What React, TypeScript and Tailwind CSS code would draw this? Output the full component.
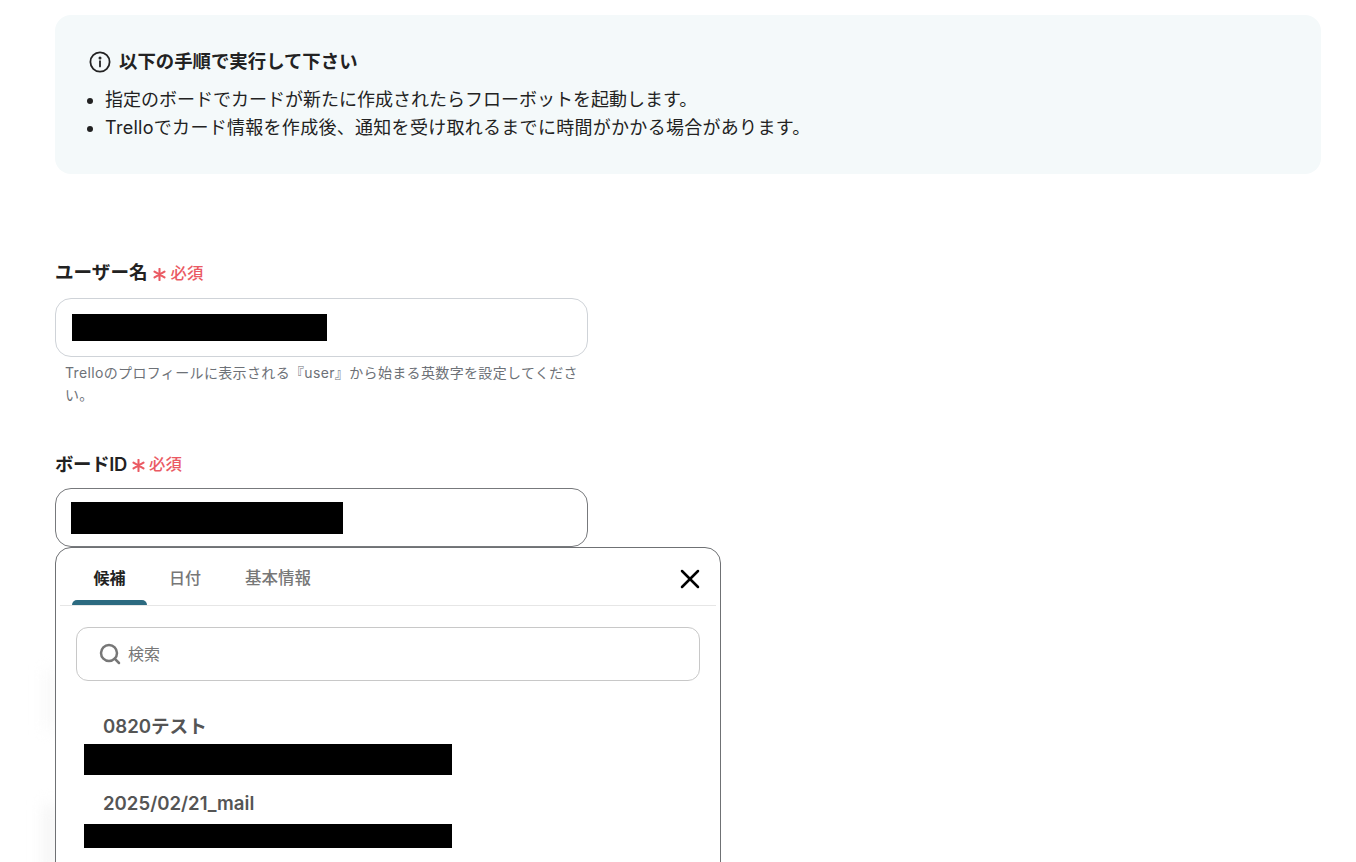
import React from "react";
import { X, Search } from "lucide-react";

function Required({ className }: { className: string }) {
  return (
    <span className="flex items-center text-[#ea5a63]">
      <span className={className + " w-[14px] flex justify-center"}>
        <svg width="13" height="13" viewBox="0 0 12 12" className="mt-[3px]" fill="none" stroke="currentColor" strokeWidth="1.9" strokeLinecap="round">
          <path d="M6 0.8V11.2M1.4 3.3L10.6 8.7M10.6 3.3L1.4 8.7" />
        </svg>
      </span>
      <span className="ml-[4px] text-[16.4px] font-medium leading-[20px]">必須</span>
    </span>
  );
}

export default function App() {
  return (
    <div className="relative h-[862px] w-[1356px] overflow-hidden bg-white pt-[15px] pl-[55px] text-[#222] font-['Inter','Noto_Sans_CJK_JP',sans-serif]">
      <div className="h-[159px] w-[1266px] rounded-[16px] bg-[#f4f9fa] pl-[34px] pt-[34px]">
        <div className="flex h-[24px] items-center">
          <svg width="22" height="22" viewBox="0 0 22 22" fill="none" stroke="#222" strokeWidth="1.8" strokeLinecap="round" className="mt-[2px]">
            <circle cx="11" cy="11" r="9.6" />
            <path d="M11 10.2V15.4" />
            <circle cx="11" cy="7" r="0.6" fill="#222" />
          </svg>
          <span className="ml-[8px] text-[18.4px] font-semibold leading-[24px]">以下の手順で実行して下さい</span>
        </div>
        <ul className="mt-[13px] list-disc pl-[16px] text-[18px] leading-[28px]">
          <li>指定のボードでカードが新たに作成されたらフローボットを起動します。</li>
          <li className="tracking-[0.29px]">Trelloでカード情報を作成後、通知を受け取れるまでに時間がかかる場合があります。</li>
        </ul>
      </div>

      <div className="mt-[87px] flex h-[24px] items-center">
        <span className="-mt-[2px] text-[18.6px] font-semibold leading-[24px]">ユーザー名</span>
        <Required className="ml-[5px]" />
      </div>
      <div className="mt-[13px] flex h-[59px] w-[533px] items-center rounded-[16px] border border-[#cfd3d8] pl-[16px]">
        <div className="h-[27px] w-[255px] bg-black" />
      </div>
      <p className="mt-[5px] w-[524px] pl-[10px] text-[14px] leading-[22px] tracking-[0.35px] text-[#6d7177]">
        Trelloのプロフィールに表示される『user』から始まる英数字を設定してください。
      </p>

      <div className="mt-[46px] flex h-[24px] items-center">
        <span className="-mt-[1px] text-[18.4px] font-semibold leading-[24px] tracking-[-0.3px]">ボードID</span>
        <Required className="ml-[4px]" />
      </div>
      <div className="mt-[12px] flex h-[59px] w-[533px] items-center rounded-[16px] border border-[#77797c] pl-[15px]">
        <div className="h-[32px] w-[272px] bg-black" />
      </div>

      <div className="absolute left-[46px] top-[670px] h-[60px] w-[12px] bg-[#f7f7f7] blur-[8px]" />
      <div className="absolute left-[44px] top-[805px] h-[70px] w-[14px] bg-[#f4f4f4] blur-[8px]" />

      <div className="relative h-[400px] w-[666px] rounded-[16px] border border-[#6f7174] bg-white">
        <div className="mx-[4px] flex h-[58px] items-stretch border-b border-[#e6e6e6] pl-[12px]">
          <div className="relative flex w-[75px] items-center justify-center pt-[3px] text-[16px] font-semibold text-[#222]">
            候補
            <span className="absolute bottom-0 left-0 h-[5px] w-[75px] rounded-t-[5px] bg-[#2c6a80]" />
          </div>
          <div className="ml-[22px] flex items-center pt-[3px] text-[16px] font-medium text-[#777]">日付</div>
          <div className="ml-[44px] flex items-center pt-[3px] text-[16.5px] font-medium text-[#777]">基本情報</div>
          <div className="ml-auto mr-[10px] flex items-center pt-[4px]">
            <X size={32} strokeWidth={1.9} color="#000" />
          </div>
        </div>
        <div className="mx-[20px] mt-[21px] flex h-[54px] w-[624px] items-center rounded-[12px] border border-[#c8c8c8] pl-[21px]">
          <Search size={24} strokeWidth={2.5} color="#777" />
          <span className="ml-[6px] text-[16px] text-[#777]">検索</span>
        </div>
        <div className="mt-[32px] pl-[47px] text-[18.6px] font-semibold leading-[26px] text-[#555]">0820テスト</div>
        <div className="ml-[28px] mt-[5px] h-[31px] w-[368px] bg-black" />
        <div className="mt-[15px] pl-[47px] text-[18.6px] font-semibold leading-[26px] text-[#555]">2025/02/21_mail</div>
        <div className="ml-[28px] mt-[8px] h-[24px] w-[368px] bg-black" />
      </div>
    </div>
  );
}
